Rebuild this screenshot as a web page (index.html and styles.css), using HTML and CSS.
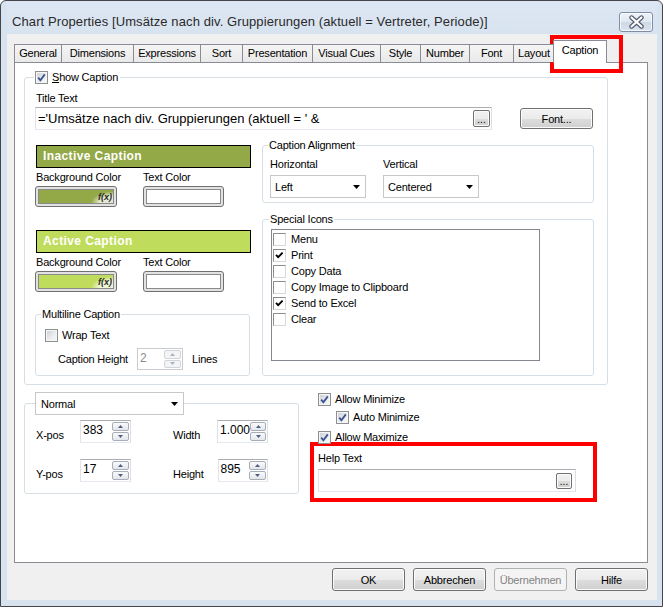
FILE: index.html
```html
<!DOCTYPE html>
<html>
<head>
<meta charset="utf-8">
<link rel="stylesheet" href="styles.css">
</head>
<body>
<div class="window">
  <div class="titlebar">
    <span class="title">Chart Properties [Umsätze nach div. Gruppierungen (aktuell = Vertreter, Periode)]</span>
    <span class="close">
      <svg width="17" height="14" viewBox="0 0 17 14"><path d="M3.5 2.5 L13.5 11.5 M13.5 2.5 L3.5 11.5" stroke="#50596a" stroke-width="4.4" stroke-linecap="round"/><path d="M3.5 2.5 L13.5 11.5 M13.5 2.5 L3.5 11.5" stroke="#ffffff" stroke-width="2.2" stroke-linecap="round"/></svg>
    </span>
  </div>
  <div class="client">
    <div class="tabs">
      <span class="tab">General</span>
      <span class="tab">Dimensions</span>
      <span class="tab">Expressions</span>
      <span class="tab">Sort</span>
      <span class="tab">Presentation</span>
      <span class="tab">Visual Cues</span>
      <span class="tab">Style</span>
      <span class="tab">Number</span>
      <span class="tab">Font</span>
      <span class="tab">Layout</span>
      <span class="tab active">Caption</span>
    </div>
    <div class="page">
      <fieldset class="grp main">
        <legend class="chk-legend"><span class="cb checked"><svg width="11" height="11" viewBox="0 0 11 11"><path d="M2.2 5.6 L4.4 8.2 L8.8 2.4" fill="none" stroke="#3b5291" stroke-width="1.8"/></svg></span><span><u>S</u>how Caption</span></legend>
        <div class="lbl">Title Text</div>
        <div class="title-row">
          <div class="textbox title-input"><span class="tb-text">='Umsätze nach div. Gruppierungen (aktuell = ' &amp;</span><span class="dots">...</span></div>
          <span class="btn font-btn">Font...</span>
        </div>
        <div class="cols">
          <div class="col-left">
            <div class="cap-head inactive">Inactive Caption</div>
            <div class="color-row">
              <div class="color-field first">
                <div class="lbl">Background Color</div>
                <div class="colorbtn"><span class="fill olive"><i class="fx">f(x)</i></span></div>
              </div>
              <div class="color-field">
                <div class="lbl">Text Color</div>
                <div class="colorbtn second"><span class="fill white"></span></div>
              </div>
            </div>
            <div class="cap-head active-cap">Active Caption</div>
            <div class="color-row">
              <div class="color-field first">
                <div class="lbl">Background Color</div>
                <div class="colorbtn"><span class="fill lime"><i class="fx">f(x)</i></span></div>
              </div>
              <div class="color-field">
                <div class="lbl">Text Color</div>
                <div class="colorbtn second"><span class="fill white"></span></div>
              </div>
            </div>
            <fieldset class="grp multiline">
              <legend>Multiline Caption</legend>
              <div class="chk-row wrap-row"><span class="cb"></span><span>Wrap Text</span></div>
              <div class="ch-row">
                <span class="ch-label">Caption Height</span>
                <div class="spin disabled"><span class="val">2</span><span class="arrows"><span><svg width="5" height="3" viewBox="0 0 5 3"><path d="M0 3 L2.5 0 L5 3Z" fill="#a9b2c2"/></svg></span><span><svg width="5" height="3" viewBox="0 0 5 3"><path d="M0 0 L2.5 3 L5 0Z" fill="#a9b2c2"/></svg></span></span></div>
                <span class="lines">Lines</span>
              </div>
            </fieldset>
          </div>
          <div class="col-right">
            <fieldset class="grp align">
              <legend>Caption Alignment</legend>
              <div class="align-row">
                <div class="field">
                  <div class="lbl">Horizontal</div>
                  <div class="combo"><span>Left</span><svg width="7" height="4" viewBox="0 0 7 4"><path d="M0 0 L7 0 L3.5 4Z" fill="#000"/></svg></div>
                </div>
                <div class="field">
                  <div class="lbl">Vertical</div>
                  <div class="combo"><span>Centered</span><svg width="7" height="4" viewBox="0 0 7 4"><path d="M0 0 L7 0 L3.5 4Z" fill="#000"/></svg></div>
                </div>
              </div>
            </fieldset>
            <fieldset class="grp icons">
              <legend>Special Icons</legend>
              <div class="listbox">
                <div class="li"><span class="cbc"></span>Menu</div>
                <div class="li"><span class="cbc"><svg width="11" height="11" viewBox="0 0 11 11"><path d="M2 4.8 L4.2 7.2 L8.6 2.6" fill="none" stroke="#000" stroke-width="1.9"/></svg></span>Print</div>
                <div class="li"><span class="cbc"></span>Copy Data</div>
                <div class="li"><span class="cbc"></span>Copy Image to Clipboard</div>
                <div class="li"><span class="cbc"><svg width="11" height="11" viewBox="0 0 11 11"><path d="M2 4.8 L4.2 7.2 L8.6 2.6" fill="none" stroke="#000" stroke-width="1.9"/></svg></span>Send to Excel</div>
                <div class="li"><span class="cbc"></span>Clear</div>
              </div>
            </fieldset>
          </div>
        </div>
      </fieldset>
      <div class="lower">
        <fieldset class="grp pos">
          <legend class="combo-legend"><div class="combo normal"><span>Normal</span><svg width="7" height="4" viewBox="0 0 7 4"><path d="M0 0 L7 0 L3.5 4Z" fill="#000"/></svg></div></legend>
          <div class="pos-grid">
            <div class="pos-field"><span class="pos-label">X-pos</span><div class="spin"><span class="val">383</span><span class="arrows"><span><svg width="5" height="3" viewBox="0 0 5 3"><path d="M0 3 L2.5 0 L5 3Z" fill="#4d5f84"/></svg></span><span><svg width="5" height="3" viewBox="0 0 5 3"><path d="M0 0 L2.5 3 L5 0Z" fill="#4d5f84"/></svg></span></span></div></div>
            <div class="pos-field"><span class="pos-label">Width</span><div class="spin"><span class="val">1.000</span><span class="arrows"><span><svg width="5" height="3" viewBox="0 0 5 3"><path d="M0 3 L2.5 0 L5 3Z" fill="#4d5f84"/></svg></span><span><svg width="5" height="3" viewBox="0 0 5 3"><path d="M0 0 L2.5 3 L5 0Z" fill="#4d5f84"/></svg></span></span></div></div>
            <div class="pos-field"><span class="pos-label">Y-pos</span><div class="spin"><span class="val">17</span><span class="arrows"><span><svg width="5" height="3" viewBox="0 0 5 3"><path d="M0 3 L2.5 0 L5 3Z" fill="#4d5f84"/></svg></span><span><svg width="5" height="3" viewBox="0 0 5 3"><path d="M0 0 L2.5 3 L5 0Z" fill="#4d5f84"/></svg></span></span></div></div>
            <div class="pos-field"><span class="pos-label">Height</span><div class="spin"><span class="val">895</span><span class="arrows"><span><svg width="5" height="3" viewBox="0 0 5 3"><path d="M0 3 L2.5 0 L5 3Z" fill="#4d5f84"/></svg></span><span><svg width="5" height="3" viewBox="0 0 5 3"><path d="M0 0 L2.5 3 L5 0Z" fill="#4d5f84"/></svg></span></span></div></div>
          </div>
        </fieldset>
        <div class="lower-right">
          <div class="chk-row r1"><span class="cb checked"><svg width="11" height="11" viewBox="0 0 11 11"><path d="M2.2 5.6 L4.4 8.2 L8.8 2.4" fill="none" stroke="#3b5291" stroke-width="1.8"/></svg></span><span>Allow Minimize</span></div>
          <div class="chk-row r2"><span class="cb checked"><svg width="11" height="11" viewBox="0 0 11 11"><path d="M2.2 5.6 L4.4 8.2 L8.8 2.4" fill="none" stroke="#3b5291" stroke-width="1.8"/></svg></span><span>Auto Minimize</span></div>
          <div class="chk-row r3"><span class="cb checked"><svg width="11" height="11" viewBox="0 0 11 11"><path d="M2.2 5.6 L4.4 8.2 L8.8 2.4" fill="none" stroke="#3b5291" stroke-width="1.8"/></svg></span><span>Allow Maximize</span></div>
          <div class="help">
            <div class="lbl">Help Text</div>
            <div class="textbox help-input"><span class="tb-text"></span><span class="dots">...</span></div>
          </div>
        </div>
      </div>
    </div>
    <div class="buttons">
      <span class="btn dlg">OK</span>
      <span class="btn dlg">Abbrechen</span>
      <span class="btn dlg disabled">Übernehmen</span>
      <span class="btn dlg">Hilfe</span>
    </div>
  </div>
  <div class="mark tab-mark"></div>
</div>
</body>
</html>
```
FILE: styles.css
```css
* { box-sizing: border-box; }
body {
  margin: 0;
  background: #ffffff;
  font-family: "Liberation Sans", Arial, sans-serif;
  font-size: 11px;
  letter-spacing: -0.2px;
  color: #000;
}
.window {
  position: relative;
  width: 663px;
  height: 607px;
  border: 1px solid #43474d;
  border-radius: 6px 6px 0 0;
  background: #d8e3f0;
  padding: 0 5px 6px 6px;
  display: flex;
  flex-direction: column;
}
.titlebar {
  height: 33px;
  flex: none;
  display: flex;
  align-items: center;
  justify-content: space-between;
  padding: 8px 4px 0 5px;
  background: linear-gradient(#dde7f3, #d8e3f0);
}
.title {
  font-size: 13px;
  letter-spacing: 0.1px;
  color: #2a2a2a;
}
.close {
  width: 34px;
  height: 20px;
  border: 1px solid #7f8ea6;
  border-radius: 3px;
  background: linear-gradient(#eef3f9, #dfe7f1 50%, #cfd9e6 51%, #d9e2ee);
  box-shadow: inset 0 0 0 1px rgba(255,255,255,0.7);
  display: flex;
  align-items: center;
  justify-content: center;
}
.client {
  flex: 1;
  background: #f0f0f0;
  padding: 6px 9px 0 7px;
  display: flex;
  flex-direction: column;
}
.tabs {
  height: 22px;
  display: flex;
  align-items: flex-end;
  position: relative;
  z-index: 2;
}
.tab {
  height: 18px;
  margin-right: -1px;
  border: 1px solid #898c95;
  border-bottom: none;
  background: linear-gradient(#f5f5f5, #e9e9e9);
  line-height: 17px;
  text-align: center;
  white-space: nowrap;
}
.tab:nth-child(1) { width: 48px; }
.tab:nth-child(2) { width: 73px; }
.tab:nth-child(3) { width: 68px; }
.tab:nth-child(4) { width: 43px; }
.tab:nth-child(5) { width: 71px; }
.tab:nth-child(6) { width: 69px; }
.tab:nth-child(7) { width: 41px; }
.tab:nth-child(8) { width: 50px; }
.tab:nth-child(9) { width: 45px; }
.tab:nth-child(10) { width: 44px; text-align: left; padding-left: 4px; }
.tab.active {
  width: 54px;
  height: 23px;
  margin: 0 -2px -1px -3px;
  background: #ffffff;
  line-height: 18px;
  position: relative;
}
.page {
  height: 501px;
  flex: none;
  border: 1px solid #898c95;
  background: #ffffff;
  padding: 7px 0 0 9px;
}
.grp {
  margin: 0;
  border: 1px solid #d5dfe5;
  border-radius: 3px;
  min-width: 0;
}
.grp legend {
  padding: 0 1px;
  margin-left: -2px;
  line-height: 13px;
}
.lbl { line-height: 13px; white-space: nowrap; }
.main {
  width: 584px;
  padding: 8px 13px 8px 11px;
}
.main > .chk-legend {
  display: flex;
  align-items: center;
  line-height: 14px;
  padding: 0 2px 0 1px;
}
.cb {
  width: 13px;
  height: 13px;
  flex: none;
  border: 1px solid #8e8f8f;
  background: linear-gradient(135deg, #c9ccd1, #eceef0 60%, #f8f8f8);
  box-shadow: inset 0 0 0 1px #f6f6f6;
  display: inline-flex;
  align-items: center;
  justify-content: center;
  margin-right: 4px;
}
.title-row {
  display: flex;
  align-items: center;
  margin-top: 2px;
}
.textbox {
  height: 23px;
  display: flex;
  align-items: center;
  background: #fff;
  border: 1px solid;
  border-color: #abadb3 #dbdfe6 #e3e9ef #e2e3ea;
}
.title-input {
  width: 457px;
  margin-left: -1px;
  padding: 0 1px 0 2px;
}
.tb-text {
  flex: 1;
  font-size: 13px;
  letter-spacing: 0;
  white-space: nowrap;
  overflow: hidden;
}
.dots {
  width: 17px;
  height: 17px;
  border: 1px solid #707070;
  border-radius: 2px;
  background: linear-gradient(#f2f2f2, #ebebeb 50%, #dddddd 51%, #cfcfcf);
  box-shadow: inset 0 0 0 1px #fbfbfb;
  font-size: 10px;
  line-height: 17px;
  text-align: center;
  letter-spacing: 0;
}
.btn {
  display: inline-flex;
  align-items: center;
  justify-content: center;
  border: 1px solid #707070;
  border-radius: 3px;
  background: linear-gradient(#f2f2f2, #ebebeb 50%, #dddddd 51%, #cfcfcf);
  box-shadow: inset 0 0 0 1px #fbfbfb;
}
.font-btn {
  width: 73px;
  height: 21px;
  margin-left: 28px;
}
.cols {
  display: flex;
  margin-top: 9px;
}
.col-left {
  width: 214px;
  padding-top: 6px;
}
.cap-head {
  width: 215px;
  height: 23px;
  border: 1px solid #000;
  color: #fff;
  font-size: 12px;
  font-weight: bold;
  letter-spacing: 0.4px;
  line-height: 21px;
  padding-left: 6px;
}
.inactive { background: #93a846; }
.active-cap { background: #c0dc5c; margin-top: 23px; }
.color-row {
  display: flex;
  margin-top: 3px;
}
.color-field.first { width: 107px; }
.color-field .lbl { margin-bottom: 2px; }
.colorbtn {
  width: 82px;
  height: 21px;
  margin-left: -1px;
  border: 1px solid #707070;
  border-radius: 3px;
  background: #e2e2e2;
  padding: 2px;
  display: flex;
}
.colorbtn.second { width: 81px; margin-left: 0; }
.fill {
  flex: 1;
  border: 1px solid #8a8a8a;
  display: flex;
  justify-content: flex-end;
  align-items: flex-end;
}
.fill.olive { background: #93a846; }
.fill.lime { background: #c0dc5c; }
.fill.white { background: #ffffff; }
.fx {
  font-size: 9px;
  font-weight: bold;
  letter-spacing: 0;
  color: #2a2a2a;
  line-height: 11px;
  padding: 0 1px 0 6px;
  background: radial-gradient(ellipse at 100% 100%, rgba(255,255,255,0.75) 45%, rgba(255,255,255,0) 75%);
}
.multiline {
  width: 215px;
  margin: 16px 0 0 -1px;
  padding: 6px 5px 5px 7px;
}
.chk-row {
  display: flex;
  align-items: center;
  line-height: 14px;
  white-space: nowrap;
}
.wrap-row { height: 16px; margin-left: 2px; }
.ch-row {
  display: flex;
  align-items: center;
  margin-top: 5px;
}
.ch-label { width: 79px; margin-left: 15px; white-space: nowrap; }
.spin {
  height: 23px;
  display: flex;
  background: #fff;
  border: 1px solid;
  border-color: #abadb3 #dbdfe6 #e3e9ef #e2e3ea;
}
.spin .val {
  flex: 1;
  padding: 2px 0 0 2px;
  font-size: 12px;
  letter-spacing: 0;
  line-height: 14px;
}
.spin .arrows {
  width: 18px;
  display: flex;
  flex-direction: column;
  gap: 1px;
  padding: 1px 1px 1px 0;
}
.spin .arrows span {
  flex: 1;
  border: 1px solid #a7aeb9;
  border-radius: 2px;
  background: linear-gradient(#fafafa, #e4e6ea);
  display: flex;
  align-items: center;
  justify-content: center;
}
.ch-row .spin { width: 46px; height: 22px; }
.spin.disabled { border-color: #c8cbd0; }
.spin.disabled .val { color: #8a8a8a; }
.spin.disabled .arrows span { border-color: #d0d5dc; background: #f4f4f4; }
.lines { margin-left: 9px; }
.col-right {
  width: 332px;
  margin-left: 12px;
}
.align {
  width: 332px;
  padding: 6px 4px 4px 7px;
}
.align-row { display: flex; }
.align-row .field { width: 113px; }
.align-row .field .lbl { margin-bottom: 4px; }
.combo {
  height: 23px;
  display: flex;
  align-items: center;
  justify-content: space-between;
  background: #fff;
  border: 1px solid #c6c8cc;
  padding: 0 5px 0 4px;
  white-space: nowrap;
}
.align-row .combo { width: 96px; }
.icons {
  width: 332px;
  margin-top: 10px;
  padding: 3px 4px 14px 8px;
}
.listbox {
  width: 269px;
  height: 132px;
  border: 1px solid #828790;
  padding: 1px 0 0 1px;
}
.li {
  height: 16px;
  display: flex;
  align-items: center;
  white-space: nowrap;
}
.cbc {
  width: 13px;
  height: 13px;
  margin-right: 5px;
  border: 1px solid;
  border-color: #8d8d8d #d8d8d8 #d8d8d8 #8d8d8d;
  background: #fff;
  display: inline-flex;
  align-items: center;
  justify-content: center;
}
.lower {
  display: flex;
  align-items: flex-start;
}
.pos {
  width: 275px;
  margin-top: 7px;
  padding: 5px 4px 11px 11px;
}
.pos > .combo-legend {
  padding: 0;
  margin-left: -1px;
  line-height: normal;
}
.combo.normal { width: 149px; padding-left: 5px; }
.pos-grid {
  display: grid;
  grid-template-columns: 137px 95px;
  row-gap: 16px;
}
.pos-field {
  display: flex;
  align-items: center;
}
.pos-label {
  width: 44px;
  padding-top: 6px;
  white-space: nowrap;
}
.pos-field .spin { width: 51px; }
.pos-field:nth-child(even) .pos-label { width: 45px; }
.lower-right {
  width: 287px;
  margin: 7px 0 0 11px;
}
.lower-right .chk-row { padding-left: 8px; }
.lower-right .r2 { margin-top: 4px; padding-left: 26px; }
.lower-right .r3 { margin-top: 6px; }
.help {
  margin-top: -2px;
  border: 4px solid #ff0000;
  padding: 6px 17px 6px 4px;
}
.help .lbl { margin-bottom: 4px; }
.help-input { width: 258px; padding-right: 3px; }
.help-input .dots { width: 16px; height: 16px; line-height: 15px; }
.buttons {
  display: flex;
  justify-content: flex-end;
  gap: 8px;
  margin-top: 5px;
}
.btn.dlg {
  width: 73px;
  height: 23px;
}
.btn.disabled {
  border-color: #adb2b5;
  background: #f4f4f4;
  box-shadow: none;
  color: #838383;
}
.mark {
  position: absolute;
  border: 4px solid #ff0000;
}
.tab-mark {
  left: 549px;
  top: 34px;
  width: 73px;
  height: 38px;
}
```
